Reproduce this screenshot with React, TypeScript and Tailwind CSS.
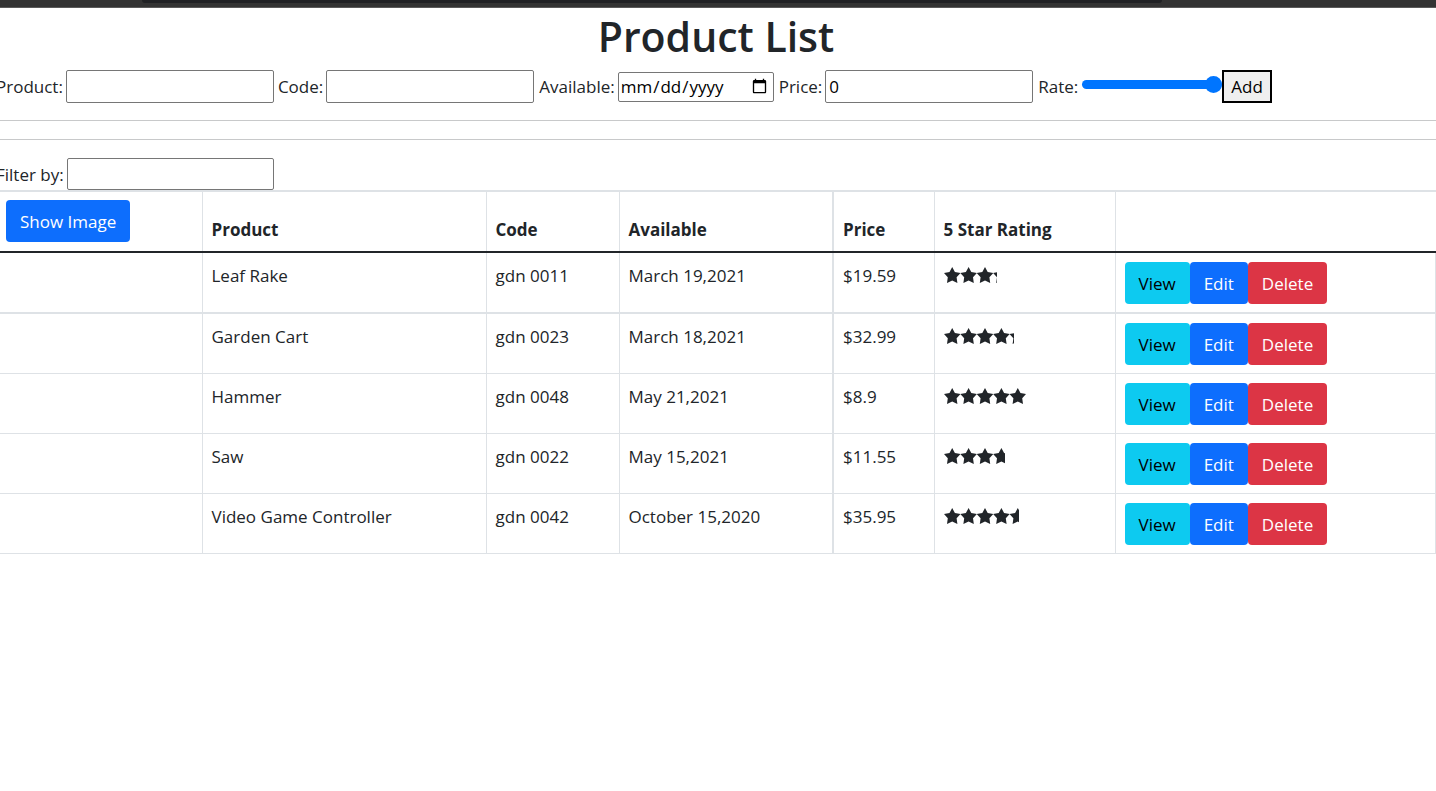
import { useState } from "react";
import type { ReactNode } from "react";

type Product = {
  name: string;
  code: string;
  available: string;
  price: string;
  rating: number;
};

const products: Product[] = [
  { name: "Leaf Rake", code: "gdn 0011", available: "March 19,2021", price: "$19.59", rating: 3.2 },
  { name: "Garden Cart", code: "gdn 0023", available: "March 18,2021", price: "$32.99", rating: 4.2 },
  { name: "Hammer", code: "gdn 0048", available: "May 21,2021", price: "$8.9", rating: 5 },
  { name: "Saw", code: "gdn 0022", available: "May 15,2021", price: "$11.55", rating: 3.7 },
  { name: "Video Game Controller", code: "gdn 0042", available: "October 15,2020", price: "$35.95", rating: 4.5 },
];

const starPath = "M8.2 0L10.9 5L16.5 5.9L12.6 10.2L13.4 16L8.2 13.6L3 16L3.8 10.2L-0.1 5.9L5.5 5Z";

function Rating({ value }: { value: number }) {
  return (
    <div
      role="img"
      aria-label={`${value} of 5 stars`}
      className="flex h-[25px] items-center overflow-hidden"
      style={{ width: Math.round(value * 16.6) }}
    >
      <svg viewBox="0 0 82 16" className="h-4 w-[82px] shrink-0" fill="currentColor" aria-hidden="true">
        {[0, 1, 2, 3, 4].map((i) => (
          <path key={i} d={starPath} transform={`translate(${i * 16.4} 0)`} />
        ))}
      </svg>
    </div>
  );
}

function Button({ tone, children, onClick }: { tone: string; children: ReactNode; onClick?: () => void }) {
  return (
    <button type="button" onClick={onClick} className={`h-[42px] rounded px-[14px] font-normal ${tone}`}>
      {children}
    </button>
  );
}

const box = "rounded-xs border border-[#767676] bg-white text-black";
const cell = "border-r border-[#dee2e6] px-[9px] pt-[9px] pb-2 align-top";
const headBase = "border-t-2 border-r border-b-2 border-t-[#dee2e6] border-r-[#dee2e6] border-b-[#212529] pt-2 text-left align-bottom font-bold";
const head = `${headBase} px-[9px] pb-2`;

export default function App() {
  const [filter, setFilter] = useState("");
  const shown = products.filter((p) => p.name.toLowerCase().includes(filter.toLowerCase()));

  return (
    <div className="min-h-screen overflow-hidden bg-white font-['Open_Sans',sans-serif] text-[17px] leading-[27px] text-[#212529]">
      <div className="h-2 border-b border-[#5a5a5a] bg-[#333333] pr-[274px] pl-[142px]">
        <div className="h-[3px] rounded-b-sm bg-[#202124]" />
      </div>
      <main className="-ml-1">
        <h1 className="pt-[3px] text-center text-[41px] leading-[50px] font-semibold">Product List</h1>
        <form className="mt-[9px] flex items-center" onSubmit={(e) => e.preventDefault()}>
          <label htmlFor="product" className="mr-[3px]">Product:</label>
          <input id="product" type="text" className={`mr-1 h-[33px] w-[208px] px-[3px] ${box}`} />
          <label htmlFor="code" className="mr-[3px]">Code:</label>
          <input id="code" type="text" className={`mr-[5px] h-[33px] w-[208px] px-[3px] ${box}`} />
          <label htmlFor="available" className="mr-[3px]">Available:</label>
          <input id="available" type="date" className={`mr-[5px] h-[30px] w-[156px] pr-[3px] pl-px ${box}`} />
          <label htmlFor="price" className="mr-[3px]">Price:</label>
          <input id="price" type="text" defaultValue="0" className={`mr-[5px] h-[33px] w-[208px] px-[3px] ${box}`} />
          <label htmlFor="rate" className="mr-1">Rate:</label>
          <input
            id="rate"
            type="range"
            min={0}
            max={5}
            defaultValue={5}
            className="mb-1 h-[9px] w-[140px] appearance-none rounded-full bg-[#0075ff] [&::-webkit-slider-thumb]:h-[17px] [&::-webkit-slider-thumb]:w-[17px] [&::-webkit-slider-thumb]:appearance-none [&::-webkit-slider-thumb]:rounded-full [&::-webkit-slider-thumb]:bg-[#0075ff]"
          />
          <button type="submit" className="h-[33px] border-2 border-black bg-[#efefef] px-[7px] text-black">Add</button>
        </form>
        <hr className="mt-[17px] border-[#c8c9ca]" />
        <hr className="mt-[18px] border-[#c8c9ca]" />
        <div className="mt-[18px] flex items-center">
          <label htmlFor="filter" className="mr-[3px]">Filter by:</label>
          <input
            id="filter"
            type="text"
            value={filter}
            onChange={(e) => setFilter(e.target.value)}
            className={`h-8 w-[207px] px-[3px] ${box}`}
          />
        </div>
        <table className="w-full table-fixed border-collapse">
          <colgroup>
            <col className="w-[206px]" />
            <col className="w-[284px]" />
            <col className="w-[133px]" />
            <col className="w-[214px]" />
            <col className="w-[101px]" />
            <col className="w-[181px]" />
            <col />
          </colgroup>
          <thead>
            <tr>
              <th className={`${headBase} pr-[9px] pb-[9px] pl-[10px]`}>
                <Button tone="bg-[#0d6efd] text-white">Show Image</Button>
              </th>
              <th className={head}>Product</th>
              <th className={head}>Code</th>
              <th className={`${head} border-r-2`}>Available</th>
              <th className={head}>Price</th>
              <th className={head}>5 Star Rating</th>
              <th className={`${head} border-r-0`} />
            </tr>
          </thead>
          <tbody>
            {shown.map((p, i) => {
              const c = `${cell} ${i === 0 ? "border-b-2" : "border-b"}`;
              return (
                <tr key={p.code}>
                  <td className={c} />
                  <td className={c}>{p.name}</td>
                  <td className={c}>{p.code}</td>
                  <td className={`${c} border-r-2`}>{p.available}</td>
                  <td className={c}>{p.price}</td>
                  <td className={c}>
                    <Rating value={p.rating} />
                  </td>
                  <td className={c}>
                    <div className="flex">
                      <Button tone="bg-[#0dcaf0] text-black">View</Button>
                      <Button tone="bg-[#0d6efd] text-white">Edit</Button>
                      <Button tone="bg-[#dc3545] text-white">Delete</Button>
                    </div>
                  </td>
                </tr>
              );
            })}
          </tbody>
        </table>
      </main>
    </div>
  );
}
